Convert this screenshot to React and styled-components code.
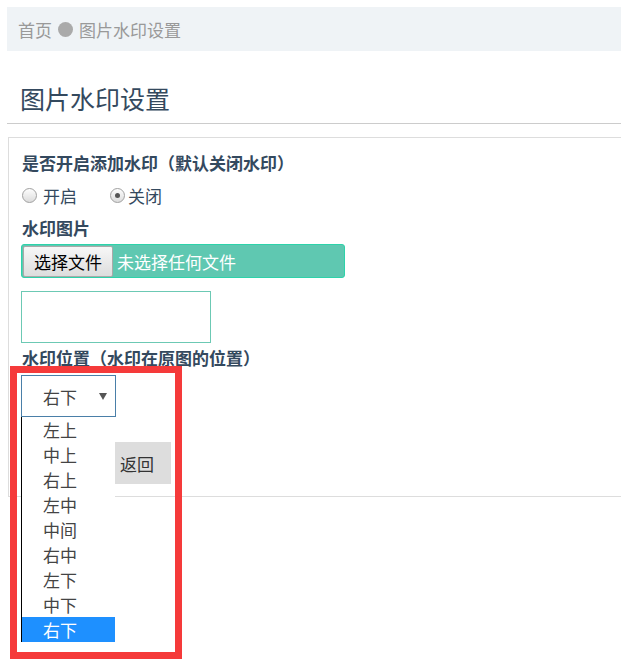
import React from 'react'
import styled, { createGlobalStyle } from 'styled-components'

const GlobalStyle = createGlobalStyle`
  html, body {
    margin: 0;
    background: #fff;
    min-height: 670px;
    font-family: "Noto Sans CJK SC", "Noto Sans", sans-serif;
  }
`;

const Page = styled.div`
  padding: 7px 0 0 7px;
  min-height: 663px;
`;

const Breadcrumb = styled.div`
  height: 44px;
  background: #eff3f6;
  padding-left: 11px;
  display: flex;
  align-items: center;
  gap: 6px;
  font-size: 17px;
  color: #999;
`;

const Dot = styled.span`
  width: 15px;
  height: 15px;
  border-radius: 50%;
  background: #aaa;
`;

const Title = styled.h1`
  margin: 0;
  padding: 29px 0 7px 13px;
  font-size: 25px;
  line-height: 36px;
  font-weight: 400;
  color: #34495e;
  border-bottom: 1px solid #ccc;
`;

const Panel = styled.div`
  margin: 13px 0 0 1px;
  border: 1px solid #ddd;
  border-right: none;
  padding: 12px 0 12px 12px;
`;

const Label = styled.div`
  font-size: 17px;
  font-weight: 700;
  line-height: 25px;
  color: #34495e;
  padding-left: 1px;
  margin-top: ${p => p.$mt || 0}px;
`;

const RadioRow = styled.div`
  display: flex;
  align-items: center;
  margin-top: 8px;
  padding-left: 1px;
  height: 25px;
  font-size: 17px;
  color: #34495e;
`;

const RadioLabel = styled.label`
  display: flex;
  align-items: center;
  margin-left: ${p => p.$ml || 0}px;
`;

const Radio = styled.span`
  width: 13px;
  height: 13px;
  border-radius: 50%;
  border: 1px solid #a0a0a0;
  background: linear-gradient(#fdfdfd, #dcdcdc);
  margin-right: ${p => p.$mr}px;
  display: flex;
  align-items: center;
  justify-content: center;
  &::after {
    content: '';
    width: 5px;
    height: 5px;
    border-radius: 50%;
    background: ${p => (p.$checked ? '#555' : 'transparent')};
  }
`;

const FileBox = styled.div`
  margin-top: 4px;
  width: 321px;
  height: 32px;
  background: #5fc8b1;
  border: 1px solid #2dd3aa;
  border-radius: 3px;
  display: flex;
  align-items: center;
  padding-left: 1px;
  color: #fff;
  font-size: 17px;
`;

const FileButton = styled.button`
  height: 31px;
  width: 90px;
  padding: 0;
  border: 1px solid #a9a9a9;
  border-radius: 2px;
  background: linear-gradient(#f7f7f7, #dddddd);
  font-family: inherit;
  font-size: 17px;
  color: #000;
  margin-right: 4px;
`;

const Preview = styled.div`
  margin-top: 13px;
  width: 188px;
  height: 50px;
  border: 1px solid #6cc9b4;
`;

const SelectWrap = styled.div`
  position: relative;
  margin-top: 5px;
  width: 95px;
`;

const SelectBox = styled.div`
  height: 40px;
  border: 1px solid #4a7fa8;
  display: flex;
  align-items: center;
  padding-left: 21px;
  font-size: 17px;
  color: #444;
  position: relative;
  &::after {
    content: '';
    position: absolute;
    right: 8px;
    top: 17px;
    border-left: 4px solid transparent;
    border-right: 4px solid transparent;
    border-top: 7px solid #555;
  }
`;

const Options = styled.ul`
  position: absolute;
  top: 100%;
  left: 0;
  width: 93px;
  margin: 0;
  padding: 0;
  list-style: none;
  background: #fff;
  border-left: 1px solid #000;
  z-index: 2;
`;

const Option = styled.li`
  height: 25px;
  line-height: 25px;
  padding-left: 21px;
  font-size: 17px;
  color: ${p => (p.$active ? '#fff' : '#444')};
  background: ${p => (p.$active ? '#1e90ff' : 'transparent')};
`;

const Highlight = styled.div`
  position: absolute;
  left: -11px;
  top: -9px;
  width: 158px;
  height: 279px;
  border: 7px solid #f53a3a;
  z-index: 3;
  pointer-events: none;
`;

const Actions = styled.div`
  display: flex;
  margin-top: 25px;
`;

const Button = styled.button`
  height: 42px;
  width: ${p => p.$w}px;
  border: none;
  padding: 0 0 0 5px;
  text-align: left;
  background: ${p => p.$bg};
  color: ${p => p.$color};
  font-family: inherit;
  font-size: 17px;
`;

const positions = ['左上', '中上', '右上', '左中', '中间', '右中', '左下', '中下', '右下']

function App() {
  return (
    <>
      <GlobalStyle />
      <Page>
        <Breadcrumb>
          <span>首页</span>
          <Dot />
          <span>图片水印设置</span>
        </Breadcrumb>
        <Title>图片水印设置</Title>
        <Panel>
          <Label>是否开启添加水印（默认关闭水印）</Label>
          <RadioRow>
            <RadioLabel>
              <Radio $mr={6} />开启
            </RadioLabel>
            <RadioLabel $ml={33}>
              <Radio $mr={3} $checked />关闭
            </RadioLabel>
          </RadioRow>
          <Label $mt={7}>水印图片</Label>
          <FileBox>
            <FileButton>选择文件</FileButton>
            未选择任何文件
          </FileBox>
          <Preview />
          <Label $mt={2}>水印位置（水印在原图的位置）</Label>
          <SelectWrap>
            <SelectBox>右下</SelectBox>
            <Options>
              {positions.map(p => (
                <Option key={p} $active={p === '右下'}>{p}</Option>
              ))}
            </Options>
            <Highlight />
          </SelectWrap>
          <Actions>
            <Button $w={94} $bg="#1e90ff" $color="#fff" aria-label="保存" />
            <Button $w={56} $bg="#ddd" $color="#333">返回</Button>
          </Actions>
        </Panel>
      </Page>
    </>
  )
}

export default App
